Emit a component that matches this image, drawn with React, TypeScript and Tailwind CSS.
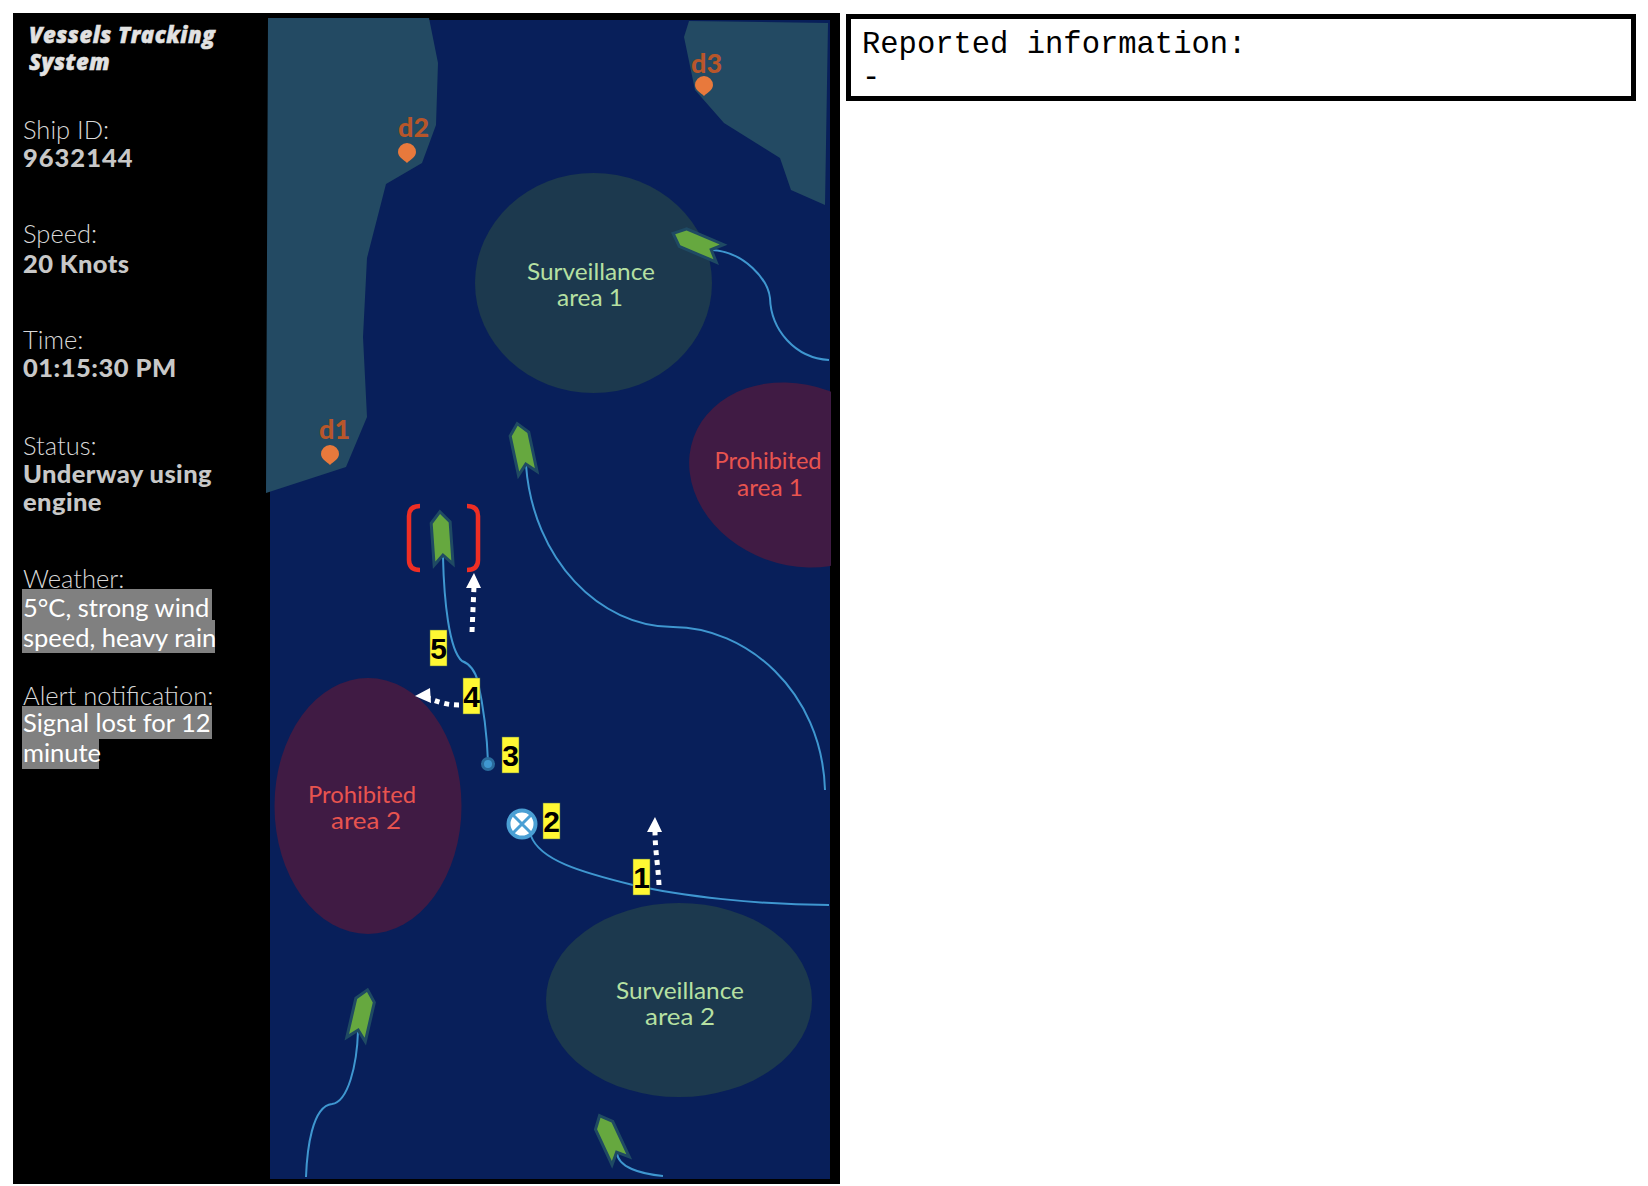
const ships = [
  { x: 443, y: 556, rot: -4, tip: -42 },
  { x: 526, y: 465, rot: -12, tip: -40 },
  { x: 358, y: 1031, rot: 13, tip: -40 },
  { x: 617, y: 1153, rot: -25, tip: -39 },
  { x: 712, y: 250, rot: -67, tip: -40 },
]

const tracks = [
  "M443,557 C444,600 449,650 462,661 C470,664 475,670 478,682 C483,705 487,735 488,762",
  "M531,836 C540,860 580,872 633,885 C680,896 760,905 829,905",
  "M526,465 C533,560 600,627 673,627 C745,627 822,690 825,790",
  "M712,250 C745,252 768,280 770,298 C771,330 795,358 829,360",
  "M358,1031 C357,1065 348,1102 332,1104 C312,1106 307,1150 306,1177",
  "M617,1153 C618,1167 640,1174 663,1176",
]

const steps = [
  { n: "1", x: 633, y: 859 },
  { n: "2", x: 543, y: 803 },
  { n: "3", x: 502, y: 737 },
  { n: "4", x: 463, y: 678 },
  { n: "5", x: 430, y: 630 },
]

const pins = [
  { label: "d1", x: 330, top: 445, tx: 319, ty: 439 },
  { label: "d2", x: 407, top: 143, tx: 398, ty: 137 },
  { label: "d3", x: 704, top: 76, tx: 691, ty: 73 },
]

const areaLabels = [
  { text: "Surveillance", x: 591, y: 280, w: 128, fill: "#b6e0a2" },
  { text: "area 1", x: 590, y: 306, w: 66, fill: "#b6e0a2" },
  { text: "Surveillance", x: 680, y: 999, w: 128, fill: "#b6e0a2" },
  { text: "area 2", x: 680, y: 1025, w: 70, fill: "#b6e0a2" },
  { text: "Prohibited", x: 768, y: 469, w: 107, fill: "#e8544f" },
  { text: "area 1", x: 770, y: 496, w: 66, fill: "#e8544f" },
  { text: "Prohibited", x: 362, y: 803, w: 108, fill: "#e8544f" },
  { text: "area 2", x: 366, y: 829, w: 70, fill: "#e8544f" },
]

function ArrowDots({ d, head }: { d: string; head: string }) {
  return (
    <g>
      <path d={d} fill="none" stroke="#fff" strokeWidth="5" strokeDasharray="5 5" />
      <polygon points={head} fill="#fff" />
    </g>
  )
}

function MapDrawing() {
  return (
    <svg viewBox="266 16 565 1165" className="mt-[3px] block h-[1165px] w-[565px] font-['Lato',sans-serif]">
      <rect x="270" y="20" width="560" height="1159" fill="#081f5a" />

      {/* land */}
      <polygon
        points="268,18 429,18 438,63 436,125 422,163 386,184 367,258 363,337 367,417 346,467 266,493"
        fill="#234a63"
      />
      <polygon
        points="689,21 828,23 825,205 791,190 780,158 756,143 724,123 695,90 684,37"
        fill="#234a63"
      />

      {/* areas */}
      <ellipse cx="593.5" cy="283" rx="118.5" ry="110" fill="#1c394e" />
      <ellipse cx="679" cy="1000" rx="133" ry="97" fill="#1c394e" />
      <ellipse cx="797" cy="475" rx="110" ry="90" transform="rotate(20 797 475)" fill="#401b44" />
      <ellipse cx="368" cy="806" rx="93.5" ry="128" fill="#401b44" />

      {areaLabels.map((l, i) => (
        <text
          key={i}
          x={l.x}
          y={l.y}
          textAnchor="middle"
          fontSize="24"
          fill={l.fill}
          textLength={l.w}
          lengthAdjust="spacingAndGlyphs"
        >
          {l.text}
        </text>
      ))}

      {pins.map((p) => (
        <g key={p.label}>
          <text x={p.tx} y={p.ty} fontSize="27" fontWeight="900" fill="#b8562a">
            {p.label}
          </text>
          <path
            d={`M${p.x},${p.top + 20} C${p.x - 3},${p.top + 17} ${p.x - 9},${p.top + 14} ${p.x - 9},${p.top + 9} A9,9 0 1 1 ${p.x + 9},${p.top + 9} C${p.x + 9},${p.top + 14} ${p.x + 3},${p.top + 17} ${p.x},${p.top + 20} Z`}
            fill="#e8793c"
          />
        </g>
      ))}

      {tracks.map((d, i) => (
        <path key={i} d={d} fill="none" stroke="#3f97d0" strokeWidth="2" />
      ))}

      {ships.map((s, i) => (
        <polygon
          key={i}
          transform={`translate(${s.x} ${s.y}) rotate(${s.rot})`}
          points={`0,${s.tip} 8,${s.tip + 9} 8,5 0,-3 -8,5 -8,${s.tip + 9}`}
          fill="#66a83f"
          stroke="#1f4a63"
          strokeWidth="6"
          strokeLinejoin="miter"
          paintOrder="stroke"
        />
      ))}

      {/* selected ship */}
      <g fill="none" stroke="#ee2e24" strokeWidth="4.5">
        <path d="M420,506 C412,506 409,510 409,516 V560 C409,566 412,570 420,570" />
        <path d="M467,506 C475,506 478,510 478,516 V560 C478,566 475,570 467,570" />
      </g>

      <ArrowDots d="M472,632 L474,586" head="474,573 466,588 481,588" />
      <ArrowDots d="M459,705 C450,705 443,704 428,698" head="415,696 430,688 431,703" />
      <ArrowDots d="M659,885 C658,865 655,850 655,830" head="655,817 647,832 662,832" />

      <circle cx="488" cy="764" r="7" fill="#2a6b9c" />
      <circle cx="488" cy="764" r="4" fill="#3f97d0" />

      <circle cx="522" cy="824" r="13.5" fill="#fff" stroke="#4a9fd4" strokeWidth="4" />
      <path d="M513,815 L531,833 M531,815 L513,833" stroke="#4a9fd4" strokeWidth="3" />

      {steps.map((s) => (
        <g key={s.n}>
          <rect x={s.x} y={s.y} width="17" height="36" fill="#fff833" stroke="#4a6a50" strokeWidth="0.5" />
          <text
            x={s.x + 8.5}
            y={s.y + 29}
            textAnchor="middle"
            fontSize="30"
            fontWeight="700"
            fill="#000"
            className="font-['Liberation_Sans',sans-serif]"
          >
            {s.n}
          </text>
        </g>
      ))}
    </svg>
  )
}

export default function App() {
  return (
    <div className="flex items-start bg-white pl-[13px] pt-[13px]">
      <div className="flex h-[1171px] w-[827px] bg-black">
        <aside className="w-[253px] pl-[10px] pt-[8px] font-['Lato',sans-serif] text-[25.5px] leading-[29px] text-[#c8c8c8]">
          <h1 className="ml-[6px] whitespace-nowrap font-['Open_Sans',sans-serif] text-[22px] font-extrabold italic leading-[27px] tracking-[0.5px] text-[#e2e2e2] [-webkit-text-stroke:0.5px_#e2e2e2]">
            Vessels Tracking
            <br />
            System
          </h1>
          <div className="mt-[40px]">
            <div className="font-light text-[#d8d8d8]">Ship ID:</div>
            <div className="font-black leading-[27px] tracking-[1px]">9632144</div>
          </div>
          <div className="mt-[48px]">
            <div className="font-light text-[#d8d8d8]">Speed:</div>
            <div className="font-black leading-[31px] tracking-[0.4px]">20 Knots</div>
          </div>
          <div className="mt-[46px]">
            <div className="font-light text-[#d8d8d8]">Time:</div>
            <div className="font-black leading-[27px] tracking-[0.5px]">01:15:30 PM</div>
          </div>
          <div className="mt-[50px]">
            <div className="font-light text-[#d8d8d8]">Status:</div>
            <div className="font-black leading-[27px] tracking-[0.4px]">Underway using</div>
            <div className="font-black tracking-[0.4px]">engine</div>
          </div>
          <div className="mt-[48px]">
            <div className="font-light text-[#d8d8d8]">Weather:</div>
            <div className="-ml-px -mt-[4px] h-[31px] w-[190px] whitespace-nowrap bg-[#808080] pl-px leading-[36px] text-white">
              5°C, strong wind
            </div>
            <div className="-ml-px h-[33px] w-[193px] whitespace-nowrap bg-[#808080] pl-px leading-[34px] text-white">
              speed, heavy rain
            </div>
          </div>
          <div className="mt-[28px]">
            <div className="font-light text-[#d8d8d8]">Alert notification:</div>
            <div className="-ml-px -mt-[4px] h-[33px] w-[190px] whitespace-nowrap bg-[#808080] pl-px leading-[32px] text-white">
              Signal lost for 12
            </div>
            <div className="-ml-px h-[30px] w-[77px] bg-[#808080] pl-px leading-[26px] text-white">minute</div>
          </div>
        </aside>
        <MapDrawing />
      </div>
      <div className="ml-[6px] mt-px h-[87px] w-[790px] border-[5px] border-black pl-[11px] pt-[10px] font-['Liberation_Mono',monospace] text-[30.5px] leading-[33px] text-black">
        <div>Reported information:</div>
        <div>-</div>
      </div>
    </div>
  )
}
